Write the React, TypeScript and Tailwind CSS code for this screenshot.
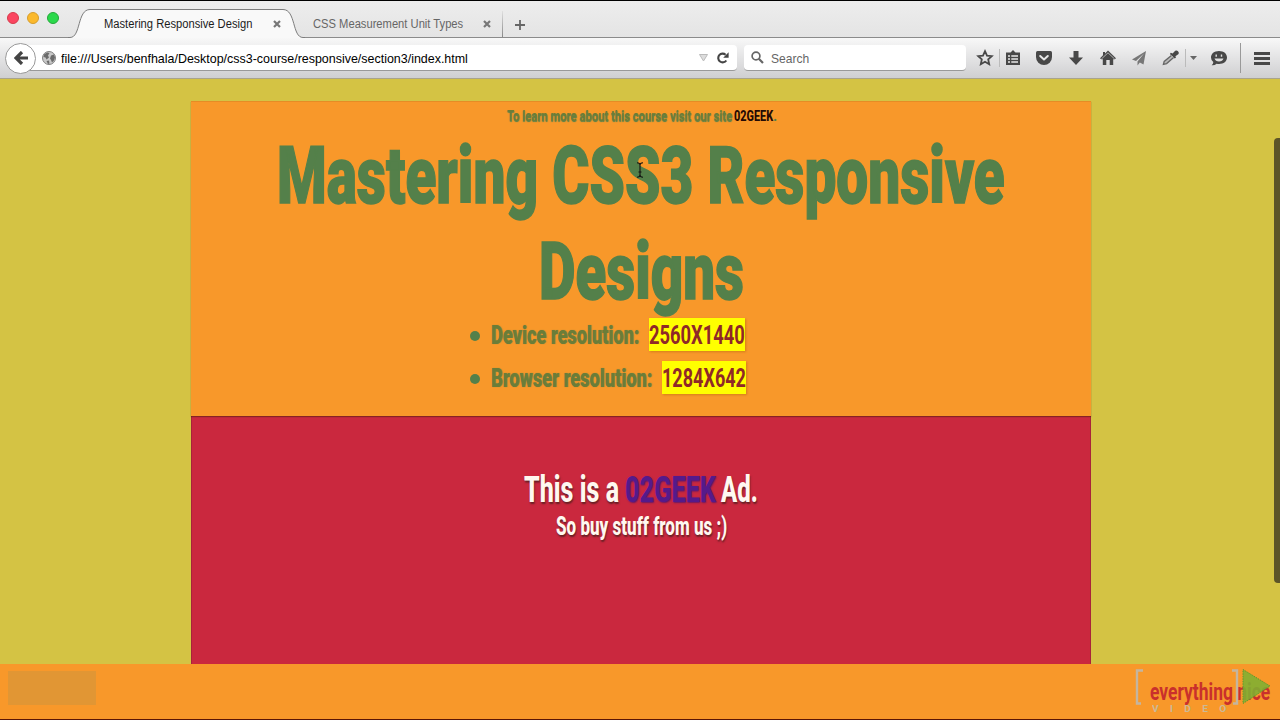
import React, { useLayoutEffect, useRef, useState } from 'react';

interface CondensedProps {
  width: number;
  className?: string;
  children: string;
}

// Squeezes a run of text horizontally so it fills exactly `width` pixels
function Condensed({ width, className = '', children }: CondensedProps) {
  const ref = useRef<HTMLSpanElement>(null);
  const [scale, setScale] = useState(1);

  useLayoutEffect(() => {
    if (ref.current) {
      setScale(width / ref.current.offsetWidth);
    }
  }, [width, children]);

  return (
    <span className={`flex shrink-0 justify-start ${className}`} style={{ width }}>
      <span
        ref={ref}
        className="block shrink-0 origin-left whitespace-nowrap"
        style={{ transform: `scaleX(${scale})` }}
      >
        {children}
      </span>
    </span>
  );
}

function CloseIcon({ className = '' }: { className?: string }) {
  return (
    <svg className={`h-2 w-2 shrink-0 ${className}`} viewBox="0 0 8 8">
      <path d="M1 1 7 7M7 1 1 7" stroke="#777" strokeWidth="2.2" />
    </svg>
  );
}

function TabStrip() {
  return (
    <div className="flex h-[37px] bg-linear-to-b from-[#ededed] to-[#e4e4e4]">
      <div className="flex w-[68px] shrink-0 items-center gap-2 border-b border-[#8b8b8b] pb-[2px] pl-[7px]">
        <span className="h-3 w-3 rounded-full border border-[#d63b4b] bg-[#fb4560]" />
        <span className="h-3 w-3 rounded-full border border-[#d69d2c] bg-[#fbb92c]" />
        <span className="h-3 w-3 rounded-full border border-[#25a83a] bg-[#2bd94b]" />
      </div>

      <svg className="h-[37px] w-6 shrink-0" viewBox="0 0 24 37">
        <path d="M0 37V36.5H2C13 36.5 9 8.5 22 8.5H24V37Z" fill="#f9f9f9" />
        <path d="M0 36.5H2C13 36.5 9 8.5 22 8.5H24" fill="none" stroke="#7d7d7d" />
      </svg>
      <div className="mt-2 flex w-[189px] shrink-0 items-center border-t border-[#7d7d7d] bg-[#f9f9f9] pl-3">
        <Condensed width={148} className="text-xs text-[#1c1c1c]">Mastering Responsive Design</Condensed>
        <CloseIcon className="ml-[21px]" />
      </div>
      <svg className="h-[37px] w-6 shrink-0" viewBox="0 0 24 37">
        <path d="M24 37V36.5H22C11 36.5 15 8.5 2 8.5H0V37Z" fill="#f9f9f9" />
        <path d="M24 36.5H22C11 36.5 15 8.5 2 8.5H0" fill="none" stroke="#7d7d7d" />
      </svg>

      <div className="flex grow items-center border-b border-[#8b8b8b] pt-[10px] pl-2">
        <Condensed width={150} className="text-xs text-[#666]">CSS Measurement Unit Types</Condensed>
        <CloseIcon className="ml-5" />
        <span className="ml-[11px] h-[26px] w-px bg-linear-to-b from-[#e0e0e0] to-[#888]" />
        <svg className="mt-[2px] ml-3 h-[10px] w-[10px]" viewBox="0 0 10 10">
          <path d="M5 0V10M0 5H10" stroke="#666" strokeWidth="1.8" />
        </svg>
      </div>
    </div>
  );
}

function ToolIcons() {
  return (
    <div className="ml-[9px] flex items-center text-[#484848]">
      <svg className="h-5 w-5" viewBox="0 0 20 20">
        <path
          d="M10 3.2 12 7.6 16.8 8.1 13.2 11.4 14.2 16.2 10 13.8 5.8 16.2 6.8 11.4 3.2 8.1 8 7.6Z"
          fill="none"
          stroke="currentColor"
          strokeWidth="1.8"
        />
      </svg>
      <span className="ml-1 h-[18px] w-px bg-[#bbb]" />
      <svg className="ml-[3px] h-5 w-5" viewBox="0 0 20 20">
        <path d="M3 4.5H7.5L10 2 12.5 4.5H17V17H3Z" fill="currentColor" />
        <path d="M5 8H7M8.3 8H15M5 11H7M8.3 11H15M5 14H7M8.3 14H15" stroke="#e8e8e8" strokeWidth="1.6" />
      </svg>
      <svg className="ml-[11px] h-5 w-5" viewBox="0 0 20 20">
        <path d="M3.5 3H16.5Q18 3 18 4.5V9A8 8 0 0 1 2 9V4.5Q2 3 3.5 3Z" fill="currentColor" />
        <path d="M6.2 8 10 11.5 13.8 8" fill="none" stroke="#e8e8e8" strokeWidth="2" strokeLinecap="round" strokeLinejoin="round" />
      </svg>
      <svg className="ml-3 h-5 w-5" viewBox="0 0 20 20">
        <path d="M7.5 3H12.5V9.5H17L10 17 3 9.5H7.5Z" fill="currentColor" />
      </svg>
      <svg className="ml-3 h-5 w-5" viewBox="0 0 20 20">
        <path d="M10 2.5 18 10.2 16.8 11.2H15.2V17H11.7V12H8.3V17H4.8V11.2H3.2L2 10.2 5 7.3V4H7V5.4Z" fill="currentColor" />
        <path d="M3.4 11 10 4.8 16.6 11" fill="none" stroke="#dcdcdc" strokeWidth=".7" />
      </svg>
      <svg className="ml-[11px] h-5 w-5 text-[#777]" viewBox="0 0 20 20">
        <path d="M17 3 3 11.5 7 13 15 5.5 8.5 13.5V17.5L10.8 14.6 14.5 16.5Z" fill="currentColor" />
      </svg>
      <svg className="ml-3 h-5 w-5" viewBox="0 0 20 20">
        <path d="M9.8 4.8 8.9 6 13.8 10.6 15 9.5 14.4 8.3 17.6 6A2.5 2.5 0 0 0 14.2 2.8L11.6 5.4Z" fill="currentColor" />
        <path d="M10.4 7.4 3.2 13.4 2.4 16.4 5.6 15.6 12.6 9.6" fill="#b9b9b9" stroke="#666" strokeWidth="1.3" />
      </svg>
      <span className="ml-1 h-[18px] w-px bg-[#bbb]" />
      <svg className="ml-1 h-1 w-[7px]" viewBox="0 0 7 4">
        <path d="M0 0H7L3.5 4Z" fill="#666" />
      </svg>
      <svg className="ml-3 h-5 w-5" viewBox="0 0 20 20">
        <path d="M10 3C14.8 3 18 5.8 18 9.5S14.8 16 10 16Q8.7 16 7.6 15.7 5.6 17.7 2.7 17.3 4.4 16 4.3 14.1 2 12.3 2 9.5C2 5.8 5.2 3 10 3Z" fill="currentColor" />
        <path d="M5.5 10.5H14.5Q13.5 13.5 10 13.5T5.5 10.5Z" fill="#e0e0e0" />
        <path d="M7.2 6.5V8.7M12.5 6.5V8.7" stroke="#e0e0e0" strokeWidth="1.4" />
      </svg>
      <span className="ml-[11px] h-[30px] w-px bg-[#999]" />
      <svg className="ml-[13px] h-[13px] w-4" viewBox="0 0 16 13">
        <path d="M0 1.5H16M0 6.5H16M0 11.5H16" stroke="currentColor" strokeWidth="2.8" />
      </svg>
    </div>
  );
}

function Toolbar() {
  return (
    <div className="flex h-[41px] items-center border-b border-[#a9a48c] bg-linear-to-b from-[#f8f8f8] to-[#cfcfd1]">
      <div className="z-10 ml-[5px] flex h-[31px] w-[31px] shrink-0 items-center justify-center rounded-full border border-[#999] bg-white">
        <svg className="h-[14px] w-[14px]" viewBox="0 0 14 14">
          <path d="M8 1 2 7 8 13M2.5 7H14" fill="none" stroke="#444" strokeWidth="3.2" />
        </svg>
      </div>
      <div className="-ml-2 flex h-[26px] w-[709px] shrink-0 items-center rounded-r-sm border-b border-[#999] bg-white pl-[14px]">
        <svg className="h-[14px] w-[14px]" viewBox="0 0 14 14">
          <circle cx="7" cy="7" r="6.5" fill="#c9c9c9" stroke="#808080" />
          <path d="M2 3.5 5 1.5 7.5 2 6 4.5 7 6.5 4.5 8.5 3.5 6.5 1.5 6ZM9 4.5 12 3.5 13 6.5 12 9.5 10 11.5 9 9 8 7.5ZM4.5 10 7 9.5 7.5 12.5 6 13Z" fill="#6b6b6b" />
        </svg>
        <Condensed width={407} className="mt-[2px] ml-[5px] text-[13px] text-black">
          file:///Users/benfhala/Desktop/css3-course/responsive/section3/index.html
        </Condensed>
        <svg className="ml-auto h-2 w-[9px]" viewBox="0 0 9 8">
          <path d="M.5.5H8.5L4.5 7Z" fill="#ddd" stroke="#bbb" />
        </svg>
        <svg className="mr-2 ml-[9px] h-3 w-3" viewBox="0 0 12 12">
          <path d="M9.3 8.5A4.4 4.4 0 1 1 8.6 2.7" fill="none" stroke="#444" strokeWidth="2.1" />
          <path d="M11.6.3V5.8H6.2Z" fill="#444" />
        </svg>
      </div>
      <div className="ml-[7px] flex h-[26px] w-[222px] shrink-0 items-center rounded-sm border-b border-[#999] bg-white pl-[7px]">
        <svg className="h-[13px] w-[13px]" viewBox="0 0 13 13">
          <circle cx="5" cy="5" r="3.9" fill="none" stroke="#666" strokeWidth="1.7" />
          <path d="M7.8 7.8 12 12" stroke="#666" strokeWidth="2.2" />
        </svg>
        <Condensed width={38} className="mt-[2px] ml-[7px] text-[13px] text-[#666]">Search</Condensed>
      </div>
      <ToolIcons />
    </div>
  );
}

interface ResolutionProps {
  label: string;
  labelWidth: number;
  value: string;
  valueWidth: number;
}

function Resolution({ label, labelWidth, value, valueWidth }: ResolutionProps) {
  return (
    <li className="flex h-[43px] items-center">
      <span className="mt-[3px] h-[10px] w-[10px] rounded-full bg-[#54804a]" />
      <Condensed
        width={labelWidth}
        className="mt-[2px] ml-[11px] font-black text-[#6b7d38] [text-shadow:1px_0px_1px_rgba(84,128,74,0.8)]"
      >
        {label}
      </Condensed>
      <span className="ml-[10px] flex h-[33px] items-center bg-[#ffff00] pt-px shadow-[1px_1px_2px_rgba(160,90,0,0.4)]">
        <Condensed width={valueWidth} className="font-bold text-[#8f2828]">{value}</Condensed>
      </span>
    </li>
  );
}

function Header() {
  return (
    <header className="relative h-[315px] border-t border-[#e68c25] bg-[#f8982a] pt-[5px] text-[#54804a] shadow-[0_1px_1px_rgba(90,30,20,0.6)]">
      <p className="flex h-5 items-center justify-center text-[14.5px] font-bold">
        <Condensed width={225} className="text-[#6b7d38] [text-shadow:0.5px_0.5px_1px_#54804a]">
          To learn more about this course visit our site
        </Condensed>
        <Condensed width={39} className="ml-[2px] font-extrabold text-[#240a05]">02GEEK</Condensed>
        <span className="w-[2px]">.</span>
      </p>
      <h1 className="-mb-[7px] flex flex-col items-center pt-px text-[79px] leading-[96px] font-black [-webkit-text-stroke:1.5px_#54804a]">
        <Condensed width={728}>Mastering CSS3 Responsive</Condensed>
        <Condensed width={205}>Designs</Condensed>
      </h1>
      <ul className="ml-[279px] text-[26px] leading-[33px]">
        <Resolution label="Device resolution:" labelWidth={148} value="2560X1440" valueWidth={96} />
        <Resolution label="Browser resolution:" labelWidth={161} value="1284X642" valueWidth={84} />
      </ul>
      {/* text cursor */}
      <svg className="absolute top-[60px] left-[445px] h-4 w-2" viewBox="0 0 8 16">
        <path d="M1 .8Q4 .8 4 3V13Q4 15.2 1 15.2M7 .8Q4 .8 4 3M4 13Q4 15.2 7 15.2M2.5 10H5.5" fill="none" stroke="#111" strokeWidth="1.1" />
      </svg>
    </header>
  );
}

function Ad() {
  return (
    <section className="grow border-x border-[#a8233a] bg-[#ca283e] pt-[53px] font-extrabold text-[#fff8f0] [text-shadow:1px_2px_2px_rgba(80,30,30,0.8)]">
      <h2 className="flex h-[41px] items-center justify-center text-[37px] font-extrabold">
        <Condensed width={95}>This is a</Condensed>
        <Condensed width={91} className="ml-[6px] text-[#551a8b] [text-shadow:1px_1px_2px_rgba(80,20,110,0.8)]">02GEEK</Condensed>
        <Condensed width={37} className="ml-[5px]">Ad.</Condensed>
      </h2>
      <p className="flex h-[34px] items-center justify-center text-[25px]">
        <Condensed width={171}>So buy stuff from us ;)</Condensed>
      </p>
    </section>
  );
}

function Watermark() {
  return (
    <div className="relative h-full w-[150px]">
      <Condensed width={120} className="absolute top-[18px] left-[20px] text-[23px] leading-[22px] font-bold text-[#c9302c]">
        everything nice
      </Condensed>
      <Condensed width={86} className="absolute top-[40px] left-[22px] text-[9px] leading-[10px] font-bold tracking-[10px] text-[#ccb896]">
        VIDEO
      </Condensed>
      <svg className="absolute top-0 left-0 h-[55px] w-[150px]" viewBox="0 0 150 55">
        <path d="M13 6.5H7V39.5H11M102 6.5H107V39.5H103" fill="none" stroke="#c4b5a0" strokeWidth="2.4" />
        <path d="M113 5.5 140 22 113 39.5Z" fill="#7daf32" fillOpacity=".88" stroke="#5f9a2c" strokeDasharray="1.5 1" />
      </svg>
    </div>
  );
}

export default function App() {
  return (
    <div className="flex h-[720px] w-[1280px] flex-col overflow-hidden border-y border-t-black border-b-[#5a1505] bg-[#d4c344] font-['Liberation_Sans',Arial,sans-serif]">
      <TabStrip />
      <Toolbar />
      <div className="flex grow justify-end font-['Roboto',sans-serif]">
        <main className="mt-[22px] flex w-[900px] flex-col">
          <Header />
          <Ad />
        </main>
        <div className="flex w-[189px] justify-end">
          <span className="mt-[59px] h-[445px] w-[6px] rounded-l-sm bg-[#5c5428]" />
        </div>
      </div>
      <footer className="flex h-[55px] shrink-0 items-start justify-between bg-[#f8982a] pl-2 font-['Roboto',sans-serif]">
        <span className="mt-[7px] h-[34px] w-[88px] bg-[#e19634]" />
        <Watermark />
      </footer>
    </div>
  );
}
